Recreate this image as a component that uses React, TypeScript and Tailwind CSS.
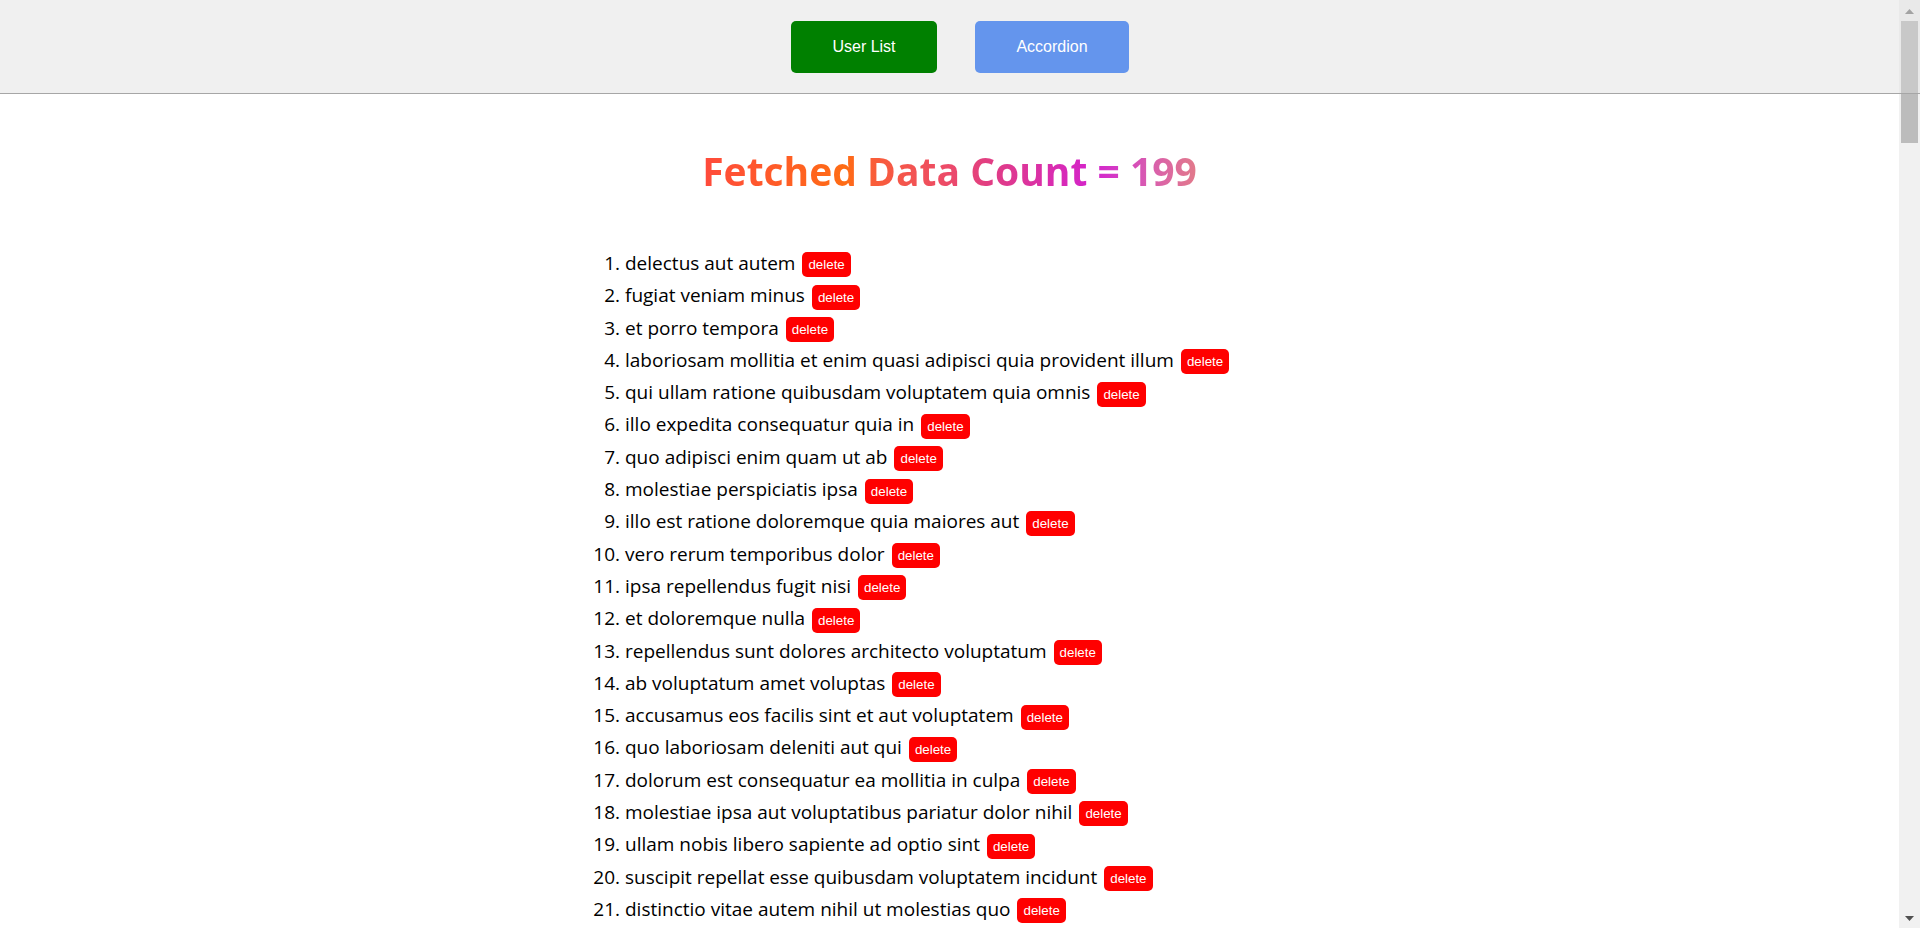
import * as React from "react";

const initialTodos = [
  "delectus aut autem",
  "fugiat veniam minus",
  "et porro tempora",
  "laboriosam mollitia et enim quasi adipisci quia provident illum",
  "qui ullam ratione quibusdam voluptatem quia omnis",
  "illo expedita consequatur quia in",
  "quo adipisci enim quam ut ab",
  "molestiae perspiciatis ipsa",
  "illo est ratione doloremque quia maiores aut",
  "vero rerum temporibus dolor",
  "ipsa repellendus fugit nisi",
  "et doloremque nulla",
  "repellendus sunt dolores architecto voluptatum",
  "ab voluptatum amet voluptas",
  "accusamus eos facilis sint et aut voluptatem",
  "quo laboriosam deleniti aut qui",
  "dolorum est consequatur ea mollitia in culpa",
  "molestiae ipsa aut voluptatibus pariatur dolor nihil",
  "ullam nobis libero sapiente ad optio sint",
  "suscipit repellat esse quibusdam voluptatem incidunt",
  "distinctio vitae autem nihil ut molestias quo",
  "et itaque necessitatibus maxime molestiae qui quas velit",
  "adipisci non ad dicta qui amet quaerat doloribus ea",
  "voluptas quo tenetur perspiciatis explicabo natus",
];

function Scrollbar() {
  return (
    <div className="relative w-[21px] h-full flex flex-col items-center bg-[#f1f1f1]">
      <div className="absolute top-0 inset-x-0 h-[93px] bg-[#e9e9e9] border-b border-[#a6a6a6] box-content" />
      <svg width="9" height="5" viewBox="0 0 9 5" className="relative mt-[9px]">
        <polygon points="4.5,0 9,5 0,5" fill="#a3a3a3" />
      </svg>
      <div className="relative mt-[7px] w-[17px] flex flex-col">
        <div className="h-[72px] bg-[#c8c8c8]" />
        <div className="h-[1px] bg-[#a6a6a6]" />
        <div className="h-[49px] bg-[#bcbcbc]" />
      </div>
      <div className="flex-1" />
      <svg width="9" height="5" viewBox="0 0 9 5" className="relative mb-[7px]">
        <polygon points="0,0 9,0 4.5,5" fill="#505050" />
      </svg>
    </div>
  );
}

export default function App() {
  const [todos, setTodos] = React.useState(initialTodos);
  const [tab, setTab] = React.useState("users");
  const total = 199 - (initialTodos.length - todos.length);

  return (
    <div className="flex h-screen overflow-hidden bg-white font-['Open_Sans',sans-serif]">
      <div className="flex-1 flex flex-col">
        <header className="flex justify-center gap-[38px] bg-[#f0f0f0] pl-[21px] pt-[21px] pb-[20px] border-b border-[#a6a6a6]">
          <button
            onClick={() => setTab("users")}
            className="w-[146px] h-[52px] rounded-[5px] bg-[#008000] text-white text-[16px] font-['Liberation_Sans',Arial,sans-serif]"
          >
            User List
          </button>
          <button
            onClick={() => setTab("accordion")}
            className="w-[154px] h-[52px] rounded-[5px] bg-[#6495ed] text-white text-[16px] font-['Liberation_Sans',Arial,sans-serif]"
          >
            Accordion
          </button>
        </header>

        {tab === "users" && (
          <main>
            <h1 className="mt-[50px] text-center text-[39px] font-bold leading-[54px]">
              <span className="bg-[linear-gradient(90deg,#ff4a3c_0%,#ff6c14_29%,#fa5e36_34%,#ec4a6a_50%,#e03c86_59%,#d423cc_79%,#d43cc4_84%,#d85cb0_90%,#e27a8a_100%)] bg-clip-text text-transparent">
                Fetched Data Count = {total}
              </span>
            </h1>
            <ol className="mt-[49px] ml-[585px] pl-10 list-decimal text-[19px] text-black">
              {todos.map((t, i) => (
                <li key={t} className="leading-[32.3px]">
                  {t}
                  <button
                    onClick={() => setTodos(todos.filter((_, j) => j !== i))}
                    className="ml-[7px] h-[25px] px-[6px] rounded-[5px] bg-[#ff0000] text-white text-[13.33px] leading-[25px] align-middle font-['Liberation_Sans',Arial,sans-serif]"
                  >
                    delete
                  </button>
                </li>
              ))}
            </ol>
          </main>
        )}
      </div>
      <Scrollbar />
    </div>
  );
}
